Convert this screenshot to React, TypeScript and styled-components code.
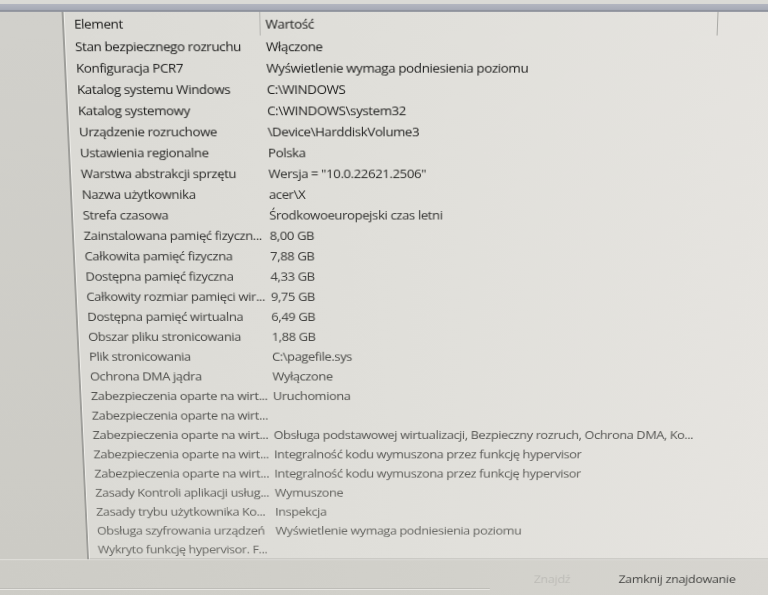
import React from "react";
import styled, { createGlobalStyle } from "styled-components";

const Global = createGlobalStyle`
  html, body {
    margin: 0;
    padding: 0;
    overflow: hidden;
    background: #d3d2cd;
    font-family: "Open Sans", "Noto Sans", "Liberation Sans", sans-serif;
  }
  #root { width: 768px; height: 595px; overflow: hidden; }
`;

const mix = (t: number) => {
  const a = [26, 26, 25];
  const b = [104, 104, 100];
  const c = a.map((v, i) => Math.round(v + (b[i] - v) * t));
  return `rgb(${c[0]}, ${c[1]}, ${c[2]})`;
};

const Stage = styled.div`
  width: 848px;
  height: 690px;
  display: flex;
  flex-direction: column;
  transform-origin: 456px 0;
  transform: translateX(-40px) perspective(1000px) rotateX(-7.5deg);
`;

const TitleBand = styled.div`
  height: 12px;
  box-sizing: border-box;
  background: linear-gradient(
    to bottom,
    #dadad6 0,
    #dadad6 4px,
    #b3b6c0 4px,
    #a6aab6 10px,
    #8f939d 10px,
    #8f939d 12px
  );
`;

const Body = styled.div`
  display: flex;
  height: 597px;
`;

const SidePanel = styled.div`
  width: 101px;
  background: linear-gradient(to bottom, #d1d0cb, #cccbc5);
  border-right: 2px solid #9e9e9a;
`;

const ListPanel = styled.div`
  flex: 1;
  display: flex;
  flex-direction: column;
  background: linear-gradient(90deg, #dbdad5 0%, #e0dfda 45%, #e6e4e0 100%);
  border-left: 1px solid #eeede9;
  border-bottom: 1px solid #b9b8b3;
`;

const Row = styled.div<{ $shade: number; $header?: boolean }>`
  display: grid;
  grid-template-columns: 195px 460px 1fr;
  height: ${(p) => (p.$header ? 24 : 22)}px;
  align-items: center;
  font-size: 13.5px;
  letter-spacing: -0.4px;
  line-height: 16px;
  color: ${(p) => mix(p.$shade)};
  white-space: nowrap;
`;

const NameCell = styled.div`
  padding-left: 9px;
  overflow: visible;
`;

const ValueCell = styled.div<{ $divider?: boolean }>`
  height: 100%;
  display: flex;
  align-items: center;
  padding-left: 5px;
  border-left: 1px solid ${(p) => (p.$divider ? "#b4b4b0" : "transparent")};
  border-right: 1px solid ${(p) => (p.$divider ? "#a9a9a5" : "transparent")};
  box-sizing: border-box;
  overflow: visible;
`;

const BottomBar = styled.div`
  flex: 1;
  display: flex;
  flex-direction: column;
  background: linear-gradient(90deg, #cdccc6, #d2d1cb 60%, #d7d5d0);
  border-top: 1px solid #e4e3df;
`;

const ButtonRow = styled.div`
  display: flex;
  justify-content: flex-end;
  align-items: center;
  gap: 52px;
  padding: 15px 46px 0 0;
  height: 14px;
`;

const BarButton = styled.span<{ $disabled?: boolean }>`
  font-size: 13.5px;
  letter-spacing: -0.3px;
  line-height: 14px;
  color: ${(p) => (p.$disabled ? "#bdbcb7" : "#484846")};
`;

const FieldEdge = styled.div`
  margin-top: 5px;
  width: 536px;
  border-top: 1px solid #e9e8e4;
  box-shadow: 0 -1px 0 #bdbcb7;
`;

const rows: [string, string][] = [
  ["Stan bezpiecznego rozruchu", "Włączone"],
  ["Konfiguracja PCR7", "Wyświetlenie wymaga podniesienia poziomu"],
  ["Katalog systemu Windows", "C:\\WINDOWS"],
  ["Katalog systemowy", "C:\\WINDOWS\\system32"],
  ["Urządzenie rozruchowe", "\\Device\\HarddiskVolume3"],
  ["Ustawienia regionalne", "Polska"],
  ["Warstwa abstrakcji sprzętu", 'Wersja = "10.0.22621.2506"'],
  ["Nazwa użytkownika", "acer\\X"],
  ["Strefa czasowa", "Środkowoeuropejski czas letni"],
  ["Zainstalowana pamięć fizyczn...", "8,00 GB"],
  ["Całkowita pamięć fizyczna", "7,88 GB"],
  ["Dostępna pamięć fizyczna", "4,33 GB"],
  ["Całkowity rozmiar pamięci wir...", "9,75 GB"],
  ["Dostępna pamięć wirtualna", "6,49 GB"],
  ["Obszar pliku stronicowania", "1,88 GB"],
  ["Plik stronicowania", "C:\\pagefile.sys"],
  ["Ochrona DMA jądra", "Wyłączone"],
  ["Zabezpieczenia oparte na wirt...", "Uruchomiona"],
  ["Zabezpieczenia oparte na wirt...", ""],
  [
    "Zabezpieczenia oparte na wirt...",
    "Obsługa podstawowej wirtualizacji, Bezpieczny rozruch, Ochrona DMA, Ko...",
  ],
  [
    "Zabezpieczenia oparte na wirt...",
    "Integralność kodu wymuszona przez funkcję hypervisor",
  ],
  [
    "Zabezpieczenia oparte na wirt...",
    "Integralność kodu wymuszona przez funkcję hypervisor",
  ],
  ["Zasady Kontroli aplikacji usług...", "Wymuszone"],
  ["Zasady trybu użytkownika Ko...", "Inspekcja"],
  ["Obsługa szyfrowania urządzeń", "Wyświetlenie wymaga podniesienia poziomu"],
  ["Wykryto funkcję hypervisor. F...", ""],
];

export default function App() {
  return (
    <>
      <Global />
      <Stage>
        <TitleBand />
        <Body>
          <SidePanel />
          <ListPanel>
            <Row $shade={0} $header>
              <NameCell>Element</NameCell>
              <ValueCell $divider>Wartość</ValueCell>
            </Row>
            {rows.map(([name, value], i) => (
              <Row key={i} $shade={i / (rows.length - 1)}>
                <NameCell>{name}</NameCell>
                <ValueCell>{value}</ValueCell>
              </Row>
            ))}
          </ListPanel>
        </Body>
        <BottomBar>
          <ButtonRow>
            <BarButton $disabled>Znajdź</BarButton>
            <BarButton>Zamknij znajdowanie</BarButton>
          </ButtonRow>
          <FieldEdge />
        </BottomBar>
      </Stage>
    </>
  );
}
